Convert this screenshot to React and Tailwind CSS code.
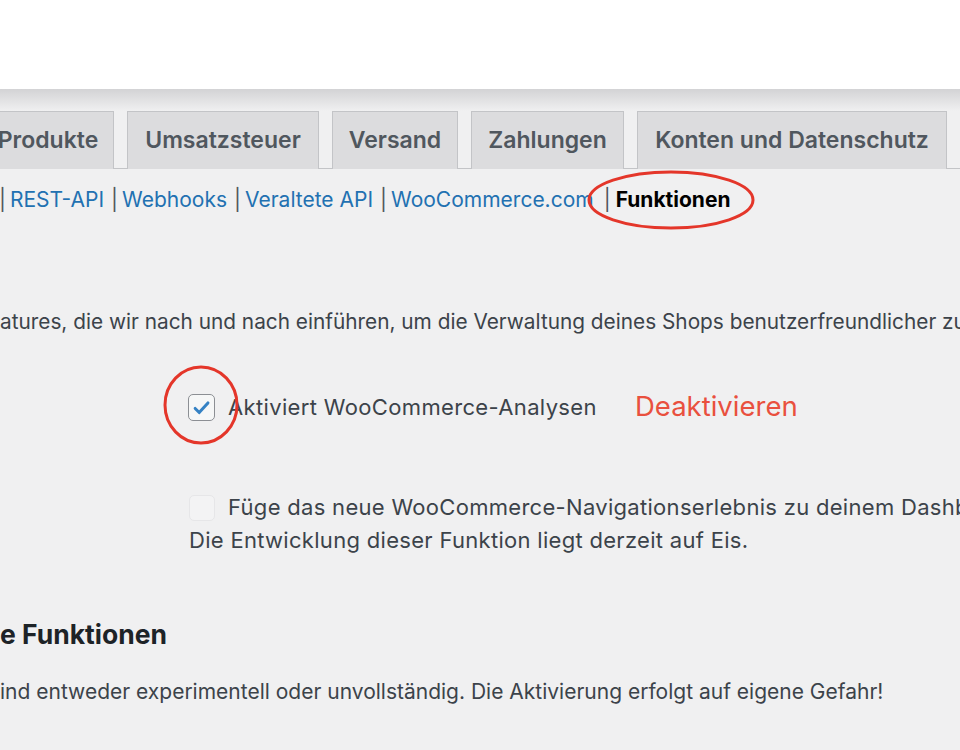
import React from 'react';

const tabs = [
    { label: 'Produkte', w: 'w-[132px]' },
    { label: 'Umsatzsteuer', w: 'w-[192px]' },
    { label: 'Versand', w: 'w-[126px]' },
    { label: 'Zahlungen', w: 'w-[153px]' },
    { label: 'Konten und Datenschutz', w: 'w-[310px]' },
];

const subLinks = ['REST-API', 'Webhooks', 'Veraltete API', 'WooCommerce.com'];

const App = () => {
    return (
        <div className="relative w-[960px] h-[750px] overflow-hidden bg-[#f0f0f1] font-['Inter','Noto_Sans',sans-serif] whitespace-nowrap">
            <div className="h-[89px] bg-white" />
            <div className="h-[22px] bg-gradient-to-b from-[#d3d3d5] to-[#f0f0f1]" />

            {/* tabs */}
            <div className="flex gap-[13px] ml-[-18px] border-b border-[#c3c4c7] h-[58px]">
                {tabs.map((tab) => (
                    <div
                        key={tab.label}
                        className={`${tab.w} shrink-0 h-[58px] flex items-center justify-center bg-[#dcdcde] border border-b-0 border-[#c3c4c7] text-[23px] font-semibold text-[#50575e]`}
                    >
                        {tab.label}
                    </div>
                ))}
            </div>

            {/* sub navigation */}
            <div className="flex items-center h-[62px] text-[21px] ml-[-1px]">
                {subLinks.map((link) => (
                    <span key={link} className="flex items-center">
                        <span className="text-[#50575e] mr-[4px]">|</span>
                        <span className="text-[#2271b1] mr-[7px]">{link}</span>
                    </span>
                ))}
                <span className="text-[#50575e] ml-[3px] mr-[5px]">|</span>
                <span className="font-bold text-black">Funktionen</span>
            </div>

            {/* description */}
            <p className="mt-[77px] text-[20.8px] text-[#3c434a] leading-[28px]">
                atures, die wir nach und nach einführen, um die Verwaltung deines Shops benutzerfreundlicher zu gestalten.
            </p>

            {/* analytics option */}
            <div className="flex items-center mt-[57px] ml-[188px] h-[28px]">
                <span className="shrink-0 w-[27px] h-[27px] rounded-[5px] border-[1.5px] border-[#8c8f94] bg-[#f6f7f7] flex items-center justify-center">
                    <svg viewBox="0 0 20 20" className="w-[23px] h-[23px]">
                        <path d="M4.5 10.8l3.5 3.6 7.6-8.4" fill="none" stroke="#3582c4" strokeWidth="2.6" strokeLinecap="round" strokeLinejoin="round" />
                    </svg>
                </span>
                <span className="shrink-0 w-[407px] ml-[13px] text-[22px] tracking-[0.35px] text-[#3c434a]">Aktiviert WooCommerce-Analysen</span>
                <span className="text-[27.5px] text-[#e9503e]">Deaktivieren</span>
            </div>

            {/* navigation option */}
            <div className="mt-[70px] ml-[189px] text-[22px] tracking-[0.3px] text-[#3c434a] leading-[33px]">
                <div className="flex items-center">
                    <span className="shrink-0 w-[26px] h-[26px] rounded-[5px] border border-[#e6e6e8] bg-[#f3f3f4]" />
                    <span className="ml-[13px]">Füge das neue WooCommerce-Navigationserlebnis zu deinem Dashboard hinzu</span>
                </div>
                <div>Die Entwicklung dieser Funktion liegt derzeit auf Eis.</div>
            </div>

            {/* experimental */}
            <h2 className="mt-[60px] text-[26.5px] font-bold text-[#1d2327] leading-[34px]">e Funktionen</h2>
            <p className="mt-[27px] text-[21px] text-[#3c434a] leading-[28px]">
                ind entweder experimentell oder unvollständig. Die Aktivierung erfolgt auf eigene Gefahr!
            </p>

            {/* red annotations */}
            <svg className="absolute left-0 top-0 pointer-events-none" width="960" height="750">
                <ellipse cx="671" cy="200" rx="82" ry="28" fill="none" stroke="#e4362a" strokeWidth="3" />
                <ellipse cx="201" cy="405" rx="36" ry="38" fill="none" stroke="#e4362a" strokeWidth="3" />
            </svg>
        </div>
    );
};

export default App;
